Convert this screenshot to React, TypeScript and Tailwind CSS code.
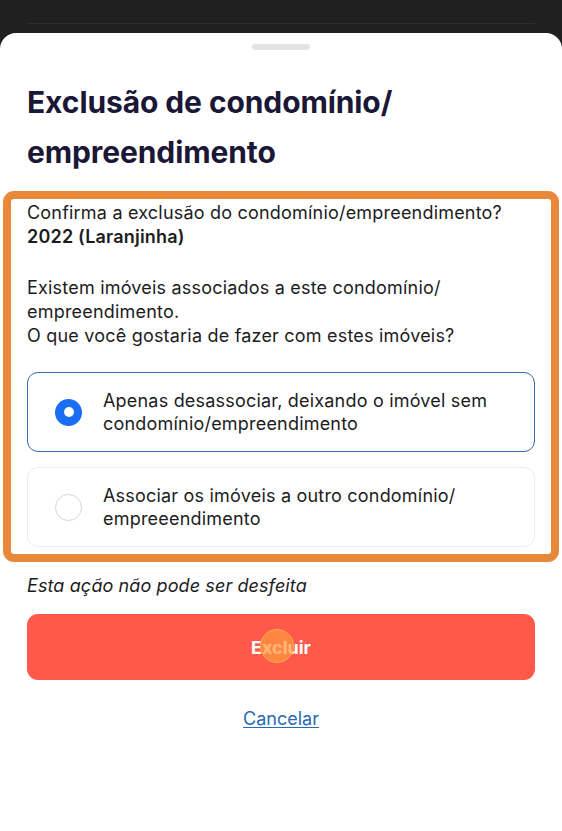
export default function App() {
  return (
    <div className="relative h-[831px] w-[562px] overflow-hidden bg-[#202020] font-['Inter',sans-serif]">
      {/* Fundo escurecido atrás do sheet */}
      <div className="h-[33px] px-[27px] pt-[23px]">
        <div className="h-px bg-[#2e2e2e]" />
      </div>

      {/* Bottom sheet */}
      <div className="h-[798px] rounded-t-[16px] bg-white">
        <div className="flex justify-center pt-[11px]">
          <div className="h-[6px] w-[58px] rounded-full bg-[#e3e3e3]" />
        </div>

        <h1 className="mt-[27px] px-[27px] text-[30px] font-bold leading-[50px] tracking-[-0.1px] text-[#1b1736]">
          Exclusão de condomínio/
          <br />
          empreendimento
        </h1>

        {/* Destaque laranja */}
        <div className="mx-[3px] mt-[14px] rounded-[11px] border-[8px] border-[#e8893a] px-[16px] pb-[7px] pt-[2px]">
          <div className="text-[18px] leading-[24px] tracking-[0.2px] text-[#1c1c1e]">
            <p>Confirma a exclusão do condomínio/empreendimento?</p>
            <p className="font-semibold">2022 (Laranjinha)</p>
            <p className="mt-[27px]">
              Existem imóveis associados a este condomínio/
              <br />
              empreendimento.
              <br />
              O que você gostaria de fazer com estes imóveis?
            </p>
          </div>

          <div className="mt-[24px] flex flex-col gap-[15px]">
            <OptionCard
              selected
              label={
                <>
                  Apenas desassociar, deixando o imóvel sem
                  <br />
                  condomínio/empreendimento
                </>
              }
            />
            <OptionCard
              label={
                <>
                  Associar os imóveis a outro condomínio/
                  <br />
                  empreeendimento
                </>
              }
            />
          </div>
        </div>

        <div className="px-[27px]">
          <p className="mt-[12px] text-[18px] italic leading-[24px] tracking-[0.1px] text-[#1c1c1e]">
            Esta ação não pode ser desfeita
          </p>

          <button className="relative mt-[16px] flex h-[66px] w-full items-center justify-center rounded-[11px] bg-[#ff594c] text-[18px] font-bold text-white">
            Excluir
            {/* indicador de toque */}
            <span className="absolute left-[233px] top-[15px] h-[34px] w-[34px] rounded-full border border-[#ffa94a] bg-[#ff9a3c]/70" />
          </button>

          <div className="mt-[27px] flex justify-center">
            <a className="text-[18px] leading-[24px] text-[#2a6ab5] underline underline-offset-2">
              Cancelar
            </a>
          </div>
        </div>
      </div>
    </div>
  );
}

function OptionCard({ selected = false, label }: { selected?: boolean; label: React.ReactNode }) {
  return (
    <div
      className={
        selected
          ? "flex h-[80px] items-center gap-[21px] rounded-[11px] border-[1.5px] border-[#3a6aa3] pl-[27px] pr-4"
          : "flex h-[80px] items-center gap-[21px] rounded-[11px] border-[1.5px] border-[#e4eef4] pl-[27px] pr-4"
      }
    >
      {selected ? (
        <span className="flex h-[27px] w-[27px] shrink-0 items-center justify-center rounded-full bg-[#1a6ef2]">
          <span className="h-[10px] w-[10px] rounded-full bg-white" />
        </span>
      ) : (
        <span className="h-[27px] w-[27px] shrink-0 rounded-full border-[1.5px] border-[#d4d4d4]" />
      )}
      <span className="text-[18px] leading-[23px] tracking-[0.2px] text-[#1c1c1e]">{label}</span>
    </div>
  );
}
